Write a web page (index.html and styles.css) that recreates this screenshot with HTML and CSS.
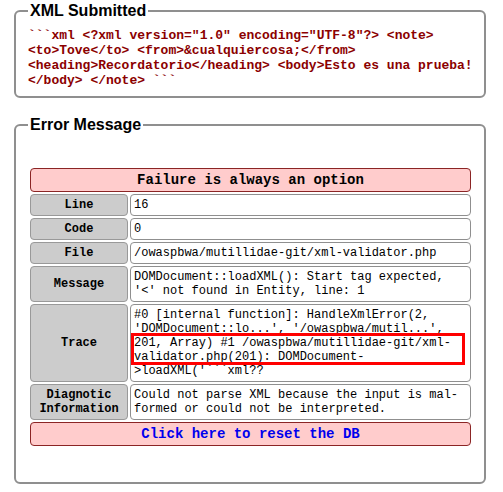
FILE: index.html
```html
<!DOCTYPE html>
<html>
<head>
<meta charset="utf-8">
<link rel="stylesheet" href="styles.css">
</head>
<body>
<fieldset class="box box-xml">
  <legend class="box-title">XML Submitted</legend>
  <div class="xml-code">```xml &lt;?xml version="1.0" encoding="UTF-8"?&gt; &lt;note&gt; &lt;to&gt;Tove&lt;/to&gt; &lt;from&gt;&amp;cualquiercosa;&lt;/from&gt; &lt;heading&gt;Recordatorio&lt;/heading&gt; &lt;body&gt;Esto es una prueba! &lt;/body&gt; &lt;/note&gt; ```</div>
</fieldset>
<fieldset class="box box-error">
  <legend class="box-title">Error Message</legend>
  <div class="err-table">
    <div class="err-head">Failure is always an option</div>
    <div class="err-label">Line</div>
    <div class="err-value">16</div>
    <div class="err-label">Code</div>
    <div class="err-value">0</div>
    <div class="err-label">File</div>
    <div class="err-value">/owaspbwa/mutillidae-git/xml-validator.php</div>
    <div class="err-label">Message</div>
    <div class="err-value">DOMDocument::loadXML(): Start tag expected, '&lt;' not found in Entity, line: 1</div>
    <div class="err-label">Trace</div>
    <div class="err-value err-trace">#0 [internal function]: HandleXmlError(2, 'DOMDocument::lo...', '/owaspbwa/mutil...', 201, Array) #1 /owaspbwa/mutillidae-git/xml-validator.php(201): DOMDocument-&gt;loadXML('```xml??<span class="highlight"></span></div>
    <div class="err-label">Diagnotic Information</div>
    <div class="err-value">Could not parse XML because the input is mal-formed or could not be interpreted.</div>
    <div class="err-foot"><a class="reset-link" href="#">Click here to reset the DB</a></div>
  </div>
</fieldset>
</body>
</html>
```

FILE: styles.css
```css
html, body {
  margin: 0;
  padding: 0;
  background: #ffffff;
}

body {
  font-family: "Liberation Sans", Arial, sans-serif;
  color: #000;
}

.box {
  margin: 2px 17px 0 14px;
  padding: 8px 6px 8px 12px;
  border: 2px solid #8f8f8f;
  border-radius: 6px;
  min-width: 0;
}

.box-error {
  margin-top: 18px;
  padding-top: 6px;
  padding-bottom: 36px;
}

.box-title {
  padding: 0 2px;
  font-family: "Liberation Sans", Arial, sans-serif;
  font-weight: bold;
  font-size: 16px;
  color: #000;
}

.xml-code {
  font-family: "Liberation Mono", "Courier New", monospace;
  font-weight: bold;
  font-size: 13px;
  line-height: 15px;
  color: #8b0000;
  word-wrap: break-word;
}

.err-table {
  margin: 28px 0 0 2px;
  width: 441px;
  display: grid;
  grid-template-columns: 98px 341px;
  gap: 2px;
  font-family: "Liberation Mono", "Courier New", monospace;
  font-size: 12px;
  line-height: 14px;
}

.err-head, .err-foot {
  grid-column: 1 / span 2;
  background: #ffcccc;
  border: 1px solid #8b2525;
  border-radius: 4px;
  padding: 3px;
  text-align: center;
  font-weight: bold;
  font-size: 14px;
  line-height: 16px;
}

.reset-link {
  color: #0000ee;
  text-decoration: none;
}

.err-label {
  background: #cccccc;
  border: 1px solid #999999;
  border-radius: 4px;
  padding: 3px;
  font-weight: bold;
  text-align: center;
  display: flex;
  align-items: center;
  justify-content: center;
}

.err-value {
  background: #ffffff;
  border: 1px solid #8f8f8f;
  border-radius: 4px;
  padding: 3px;
  color: #000;
}

.err-trace {
  position: relative;
}

.highlight {
  position: absolute;
  left: 0;
  top: 28px;
  width: 334px;
  height: 32px;
  box-sizing: border-box;
  border: 3px solid #ff0000;
}
```
